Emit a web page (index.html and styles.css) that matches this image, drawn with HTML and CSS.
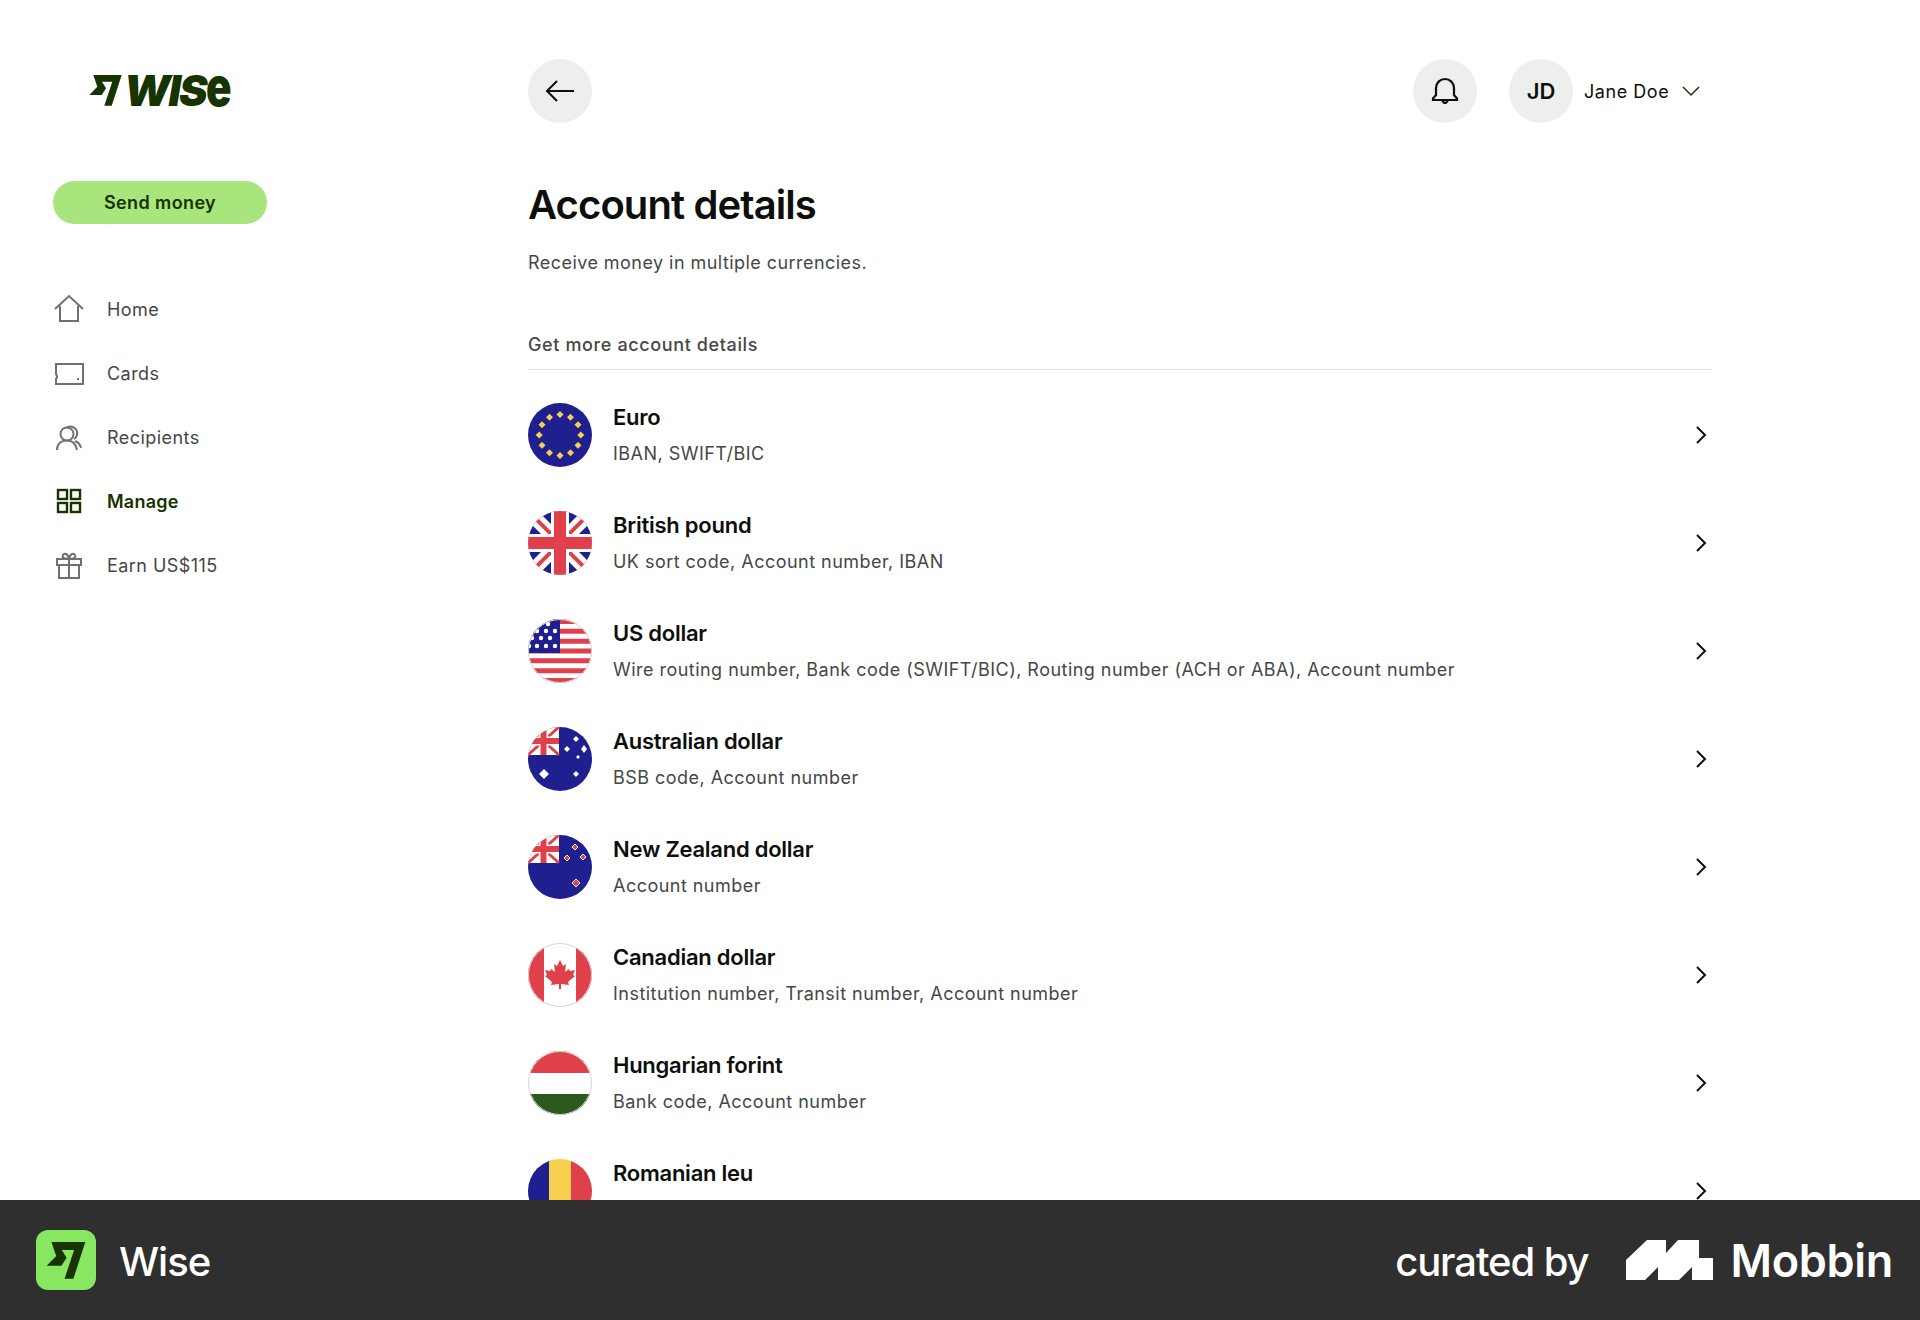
FILE: index.html
```html
<!DOCTYPE html>
<html lang="en">
<head>
    <meta charset="UTF-8">
    <title>Account details</title>
    <link rel="stylesheet" href="styles.css">
</head>
<body>
    <div class="app">
        <aside class="sidebar">
            <div class="brand">
                <svg class="brand-mark" viewBox="0 0 33 31"><path fill="#163300" d="M4.300 0H32.700L22.700 30.700H15.300L23.300 6.700H13L17 13.300 12.700 20H.3L8.300 11.700Z"/></svg>
                <span class="brand-name">WIS<span class="brand-e">e</span></span>
            </div>
            <button class="send-btn">Send money</button>
            <nav class="nav">
                <a class="nav-item">
                    <svg class="nav-icon" viewBox="0 0 32 32" fill="none" stroke="#6f7170" stroke-width="2"><path d="M2 16 16 3 30 16M7 13V28H25V13"/></svg>
                    Home
                </a>
                <a class="nav-item">
                    <svg class="nav-icon" viewBox="0 0 32 32" fill="none" stroke="#6f7170" stroke-width="2"><path d="M3 7H30V27H3V22Q5 20 3 17ZM24 22H26"/></svg>
                    Cards
                </a>
                <a class="nav-item">
                    <svg class="nav-icon" viewBox="0 0 32 32" fill="none" stroke="#6f7170" stroke-width="2"><circle cx="14" cy="13" r="6.500"/><path d="M14 6.500A6.500 6.500 0 1 1 21 18M4 29C4 23 8 19.500 14 19.500S23 23 24 29M22 20Q27 22 28 27"/></svg>
                    Recipients
                </a>
                <a class="nav-item active">
                    <svg class="nav-icon" viewBox="0 0 32 32" fill="none" stroke="#163300" stroke-width="2.400"><rect x="5" y="5" width="9" height="9"/><rect x="18" y="5" width="9" height="9"/><rect x="5" y="18" width="9" height="9"/><rect x="18" y="18" width="9" height="9"/></svg>
                    Manage
                </a>
                <a class="nav-item">
                    <svg class="nav-icon" viewBox="0 0 32 32" fill="none" stroke="#6f7170" stroke-width="2"><path d="M4 10H28V16H4ZM6 16V29H26V16M16 10V29M16 10C10 10 9 8 10 6S15 4 16 10C17 4 21 4 22 6S22 10 16 10"/></svg>
                    Earn US$115
                </a>
            </nav>
        </aside>

        <main class="main">
            <header class="topbar">
                <button class="round-btn">
                    <svg width="32" height="32" viewBox="0 0 32 32" fill="none" stroke="#0e0f0c" stroke-width="2"><path d="M30 16H3M13 6 3 16 13 26"/></svg>
                </button>
                <div class="topbar-right">
                    <button class="round-btn">
                        <svg width="32" height="32" viewBox="0 0 32 32" fill="none" stroke="#0e0f0c" stroke-width="2.200"><path d="M4 25H28V23.500L25 20V13A9 9 0 0 0 7 13V20L4 23.500ZM13 25Q16 31 19 25"/></svg>
                    </button>
                    <div class="user">
                        <span class="round-btn initials">JD</span>
                        <span class="user-name">Jane Doe</span>
                        <svg width="20" height="12" viewBox="0 0 20 12" fill="none" stroke="#163300" stroke-width="1.500"><path d="M2 2 10 10 18 2"/></svg>
                    </div>
                </div>
            </header>

            <h1 class="title">Account details</h1>
            <p class="subtitle">Receive money in multiple currencies.</p>
            <h2 class="section-title">Get more account details</h2>

            <ul class="list">
                <li class="row">
                    <svg class="flag" viewBox="0 0 64 64">
                        <rect width="64" height="64" fill="#1f1f8f"/>
                        <path fill="#f6d04d" d="M32 8l3.500 3.500-3.500 3.500-3.500-3.500zM42.500 10.800l3.500 3.500-3.500 3.500-3.500-3.500zM50 18.300l3.500 3.500-3.500 3.500-3.500-3.500zM52.800 28.500l3.500 3.500-3.500 3.500-3.500-3.500zM50 38.700l3.500 3.500-3.500 3.500-3.500-3.500zM42.500 46.200l3.500 3.500-3.500 3.500-3.500-3.500zM32 49l3.500 3.500-3.500 3.500-3.500-3.500zM21.500 46.200l3.500 3.500-3.500 3.500-3.500-3.500zM14 38.700l3.500 3.500-3.500 3.500-3.500-3.500zM11.200 28.500l3.500 3.500-3.500 3.500-3.500-3.500zM14 18.300l3.500 3.500-3.500 3.500-3.500-3.500zM21.500 10.800l3.500 3.500-3.500 3.500-3.500-3.500z"/>
                    </svg>
                    <div class="row-text"><div class="row-title">Euro</div><div class="row-sub">IBAN, SWIFT/BIC</div></div>
                    <svg class="chevron" viewBox="0 0 12 20" fill="none" stroke="#0e0f0c" stroke-width="2"><path d="M2 2 10 10 2 18"/></svg>
                </li>
                <li class="row">
                    <svg class="flag" viewBox="0 0 64 64">
                        <rect width="64" height="64" fill="#1f1f8f"/>
                        <path d="M0 0 64 64M64 0 0 64" stroke="#fff" stroke-width="14"/>
                        <path d="M0 0 64 64M64 0 0 64" stroke="#e0404a" stroke-width="4"/>
                        <path d="M32 0V64M0 32H64" stroke="#fff" stroke-width="18"/>
                        <path d="M32 0V64M0 32H64" stroke="#e0404a" stroke-width="12"/>
                    </svg>
                    <div class="row-text"><div class="row-title">British pound</div><div class="row-sub">UK sort code, Account number, IBAN</div></div>
                    <svg class="chevron" viewBox="0 0 12 20" fill="none" stroke="#0e0f0c" stroke-width="2"><path d="M2 2 10 10 2 18"/></svg>
                </li>
                <li class="row">
                    <svg class="flag bordered" viewBox="0 0 64 64">
                        <rect width="64" height="64" fill="#fff"/>
                        <path d="M0 2.500H64M0 12.300H64M0 22.200H64M0 32H64M0 41.800H64M0 51.700H64M0 61.500H64" stroke="#e0404a" stroke-width="4.900"/>
                        <rect width="32" height="34" fill="#1f1f8f"/>
                        <g fill="#fff">
                            <circle cx="9" cy="12" r="2.200"/><circle cx="20" cy="5" r="2.200"/><circle cx="27" cy="12" r="2.200"/><circle cx="18" cy="12" r="2.200"/>
                            <circle cx="4" cy="19" r="2.200"/><circle cx="13" cy="19" r="2.200"/><circle cx="22" cy="19" r="2.200"/>
                            <circle cx="9" cy="27" r="2.200"/><circle cx="18" cy="27" r="2.200"/><circle cx="27" cy="27" r="2.200"/><circle cx="1" cy="27" r="2.200"/>
                        </g>
                    </svg>
                    <div class="row-text"><div class="row-title">US dollar</div><div class="row-sub">Wire routing number, Bank code (SWIFT/BIC), Routing number (ACH or ABA), Account number</div></div>
                    <svg class="chevron" viewBox="0 0 12 20" fill="none" stroke="#0e0f0c" stroke-width="2"><path d="M2 2 10 10 2 18"/></svg>
                </li>
                <li class="row">
                    <svg class="flag" viewBox="0 0 64 64">
                        <rect width="64" height="64" fill="#1f1f8f"/>
                        <rect width="31" height="28" fill="#fff"/>
                        <path d="M0 0 31 28M31 0 0 28" stroke="#e0404a" stroke-width="3"/>
                        <path d="M15.500 0V28M0 14H31" stroke="#fff" stroke-width="9"/>
                        <path d="M15.500 0V28M0 14H31" stroke="#e0404a" stroke-width="6"/>
                        <g fill="#fff">
                            <path d="M48 9 51 12 48 15 45 12Z"/><path d="M39 19 42 22 39 25 36 22Z"/><path d="M56 18 59 22 56 26 53 22Z"/><path d="M50 28 52 30 50 32 48 30Z"/><path d="M48 44 51 47 48 50 45 47Z"/><path d="M16 42 21 47 16 52 11 47Z"/>
                        </g>
                    </svg>
                    <div class="row-text"><div class="row-title">Australian dollar</div><div class="row-sub">BSB code, Account number</div></div>
                    <svg class="chevron" viewBox="0 0 12 20" fill="none" stroke="#0e0f0c" stroke-width="2"><path d="M2 2 10 10 2 18"/></svg>
                </li>
                <li class="row">
                    <svg class="flag" viewBox="0 0 64 64">
                        <rect width="64" height="64" fill="#1f1f8f"/>
                        <rect width="31" height="28" fill="#fff"/>
                        <path d="M0 0 31 28M31 0 0 28" stroke="#e0404a" stroke-width="3"/>
                        <path d="M15.500 0V28M0 14H31" stroke="#fff" stroke-width="9"/>
                        <path d="M15.500 0V28M0 14H31" stroke="#e0404a" stroke-width="6"/>
                        <g fill="#e0404a" stroke="#fff" stroke-width="1">
                            <path d="M47 9 50 12 47 15 44 12Z"/><path d="M39 20 42 23 39 26 36 23Z"/><path d="M55 19 58 22 55 25 52 22Z"/><path d="M48 44 52 48 48 52 44 48Z"/>
                        </g>
                    </svg>
                    <div class="row-text"><div class="row-title">New Zealand dollar</div><div class="row-sub">Account number</div></div>
                    <svg class="chevron" viewBox="0 0 12 20" fill="none" stroke="#0e0f0c" stroke-width="2"><path d="M2 2 10 10 2 18"/></svg>
                </li>
                <li class="row">
                    <svg class="flag bordered" viewBox="0 0 64 64">
                        <rect width="64" height="64" fill="#fff"/>
                        <rect width="16" height="64" fill="#e0404a"/>
                        <rect x="48" width="16" height="64" fill="#e0404a"/>
                        <path fill="#e0404a" d="M32 17 35 23 38 21 37 29 41 26 42 28 47 27 45 32 47 33 40 39 41 42 33 41V46H31V41L23 42 24 39 17 33 19 32 17 27 22 28 23 26 27 29 26 21 29 23Z"/>
                    </svg>
                    <div class="row-text"><div class="row-title">Canadian dollar</div><div class="row-sub">Institution number, Transit number, Account number</div></div>
                    <svg class="chevron" viewBox="0 0 12 20" fill="none" stroke="#0e0f0c" stroke-width="2"><path d="M2 2 10 10 2 18"/></svg>
                </li>
                <li class="row">
                    <svg class="flag bordered" viewBox="0 0 64 64">
                        <rect width="64" height="22" fill="#e0404a"/>
                        <rect y="22" width="64" height="21" fill="#fff"/>
                        <rect y="43" width="64" height="21" fill="#2a5a1e"/>
                    </svg>
                    <div class="row-text"><div class="row-title">Hungarian forint</div><div class="row-sub">Bank code, Account number</div></div>
                    <svg class="chevron" viewBox="0 0 12 20" fill="none" stroke="#0e0f0c" stroke-width="2"><path d="M2 2 10 10 2 18"/></svg>
                </li>
                <li class="row">
                    <svg class="flag" viewBox="0 0 64 64">
                        <rect width="22" height="64" fill="#1f1f8f"/>
                        <rect x="21" width="22" height="64" fill="#f6d04d"/>
                        <rect x="43" width="21" height="64" fill="#e0404a"/>
                    </svg>
                    <div class="row-text"><div class="row-title">Romanian leu</div><div class="row-sub"></div></div>
                    <svg class="chevron" viewBox="0 0 12 20" fill="none" stroke="#0e0f0c" stroke-width="2"><path d="M2 2 10 10 2 18"/></svg>
                </li>
            </ul>
        </main>
    </div>

    <footer class="footer">
        <div class="footer-app">
            <span class="app-icon">
                <svg width="40" height="37" viewBox="0 0 33 31"><path fill="#163300" d="M4.300 0H32.700L22.700 30.700H15.300L23.300 6.700H13L17 13.300 12.700 20H.3L8.300 11.700Z"/></svg>
            </span>
            <span class="app-name">Wise</span>
        </div>
        <div class="footer-credit">
            <span class="curated">curated by</span>
            <svg class="mobbin-mark" viewBox="0 0 87 40"><path fill="#fff" d="M0 20 21 0H40V13L52 0H73V18H87V40H66V27L53 40H32V27L19 40H0Z"/></svg>
            <span class="mobbin-name">Mobbin</span>
        </div>
    </footer>
</body>
</html>
```
FILE: styles.css
```css
* {
    box-sizing: border-box;
}

body {
    margin: 0;
    height: 1320px;
    overflow: hidden;
    background: #fff;
    font-family: Inter, "Liberation Sans", sans-serif;
    color: #0e0f0c;
}

.app {
    display: flex;
    height: 1200px;
    overflow: hidden;
}

/* Sidebar */
.sidebar {
    width: 528px;
    flex: none;
    padding: 73px 0 0 53px;
}

.brand {
    display: flex;
    align-items: center;
    gap: 2px;
    height: 34px;
    margin-left: 36px;
    color: #163300;
}

.brand-mark {
    width: 33px;
    height: 31px;
    flex: none;
}

.brand-name {
    margin-bottom: 4px;
    font-size: 43px;
    font-weight: 900;
    line-height: 34px;
    letter-spacing: -2px;
    font-style: italic;
    white-space: nowrap;
}

.brand-e {
    display: inline-block;
    font-size: 54px;
    font-style: normal;
    letter-spacing: 0;
    transform: scaleX(0.78);
    transform-origin: left center;
}

.send-btn {
    display: block;
    width: 214px;
    height: 43px;
    margin-top: 74px;
    border: none;
    border-radius: 22px;
    background: #a8e57c;
    color: #163300;
    font: 600 18px Inter, sans-serif;
    letter-spacing: 0.4px;
}

.nav {
    margin-top: 53px;
    display: flex;
    flex-direction: column;
}

.nav-item {
    display: flex;
    align-items: center;
    height: 64px;
    gap: 22px;
    font-size: 18px;
    letter-spacing: 0.45px;
    color: #454745;
}

.nav-item.active {
    color: #163300;
    font-weight: 600;
    letter-spacing: 0.25px;
}

.nav-icon {
    width: 32px;
    height: 32px;
    flex: none;
}

/* Main column */
.main {
    width: 1184px;
    flex: none;
    padding-top: 59px;
}

.topbar {
    display: flex;
    justify-content: space-between;
    height: 64px;
}

.topbar-right {
    display: flex;
    gap: 32px;
}

.round-btn {
    display: flex;
    align-items: center;
    justify-content: center;
    width: 64px;
    height: 64px;
    padding: 0;
    border: none;
    border-radius: 50%;
    background: #edefec;
}

.user {
    display: flex;
    align-items: center;
    gap: 10px;
    width: 203px;
}

.initials {
    font-size: 22px;
    font-weight: 600;
}

.user-name {
    margin-left: 1px;
    font-size: 18px;
    letter-spacing: 0.55px;
    margin-right: 2px;
}

.title {
    margin: 0;
    padding-top: 58px;
    font-size: 40px;
    line-height: 48px;
    font-weight: 600;
    letter-spacing: -0.9px;
}

.subtitle {
    margin: 21px 0 0;
    font-size: 18px;
    line-height: 26px;
    letter-spacing: 0.45px;
    color: #454745;
}

.section-title {
    margin: 56px 0 0;
    padding-bottom: 11px;
    border-bottom: 1px solid #e2e4e1;
    font-size: 18px;
    line-height: 26px;
    font-weight: 500;
    letter-spacing: 0.62px;
    color: #454745;
}

.list {
    list-style: none;
    margin: 0;
    padding: 11px 0 0;
}

.row {
    display: flex;
    align-items: center;
    height: 108px;
    gap: 21px;
}

.flag {
    width: 64px;
    height: 64px;
    flex: none;
    border-radius: 50%;
}

.flag.bordered {
    outline: 1px solid #d5d5d5;
    outline-offset: -1px;
}

.row-text {
    flex: 1;
    padding-bottom: 2px;
}

.row-title {
    font-size: 22px;
    line-height: 30px;
    font-weight: 600;
    letter-spacing: -0.25px;
}

.row-sub {
    margin-top: 9px;
    min-height: 26px;
    font-size: 18px;
    line-height: 26px;
    letter-spacing: 0.47px;
    color: #454745;
}

.chevron {
    width: 12px;
    height: 20px;
    flex: none;
    margin-right: 5px;
}

/* Footer strip */
.footer {
    display: flex;
    align-items: center;
    justify-content: space-between;
    height: 120px;
    padding: 0 27px 0 36px;
    background: #2f2f2f;
    color: #fff;
}

.footer-app {
    display: flex;
    align-items: center;
    gap: 23px;
}

.app-icon {
    display: flex;
    align-items: center;
    justify-content: center;
    width: 60px;
    height: 60px;
    border-radius: 12px;
    background: #88e761;
}

.app-name {
    margin-top: 2px;
    font-size: 40px;
    font-weight: 500;
    letter-spacing: -1px;
}

.footer-credit {
    display: flex;
    align-items: center;
}

.curated {
    margin-top: 2px;
    font-size: 40px;
    font-weight: 500;
    letter-spacing: -1.1px;
    margin-right: 38px;
}

.mobbin-mark {
    width: 87px;
    height: 40px;
    margin-right: 17px;
}

.mobbin-name {
    font-size: 45px;
    font-weight: 600;
    letter-spacing: -0.3px;
}
```
